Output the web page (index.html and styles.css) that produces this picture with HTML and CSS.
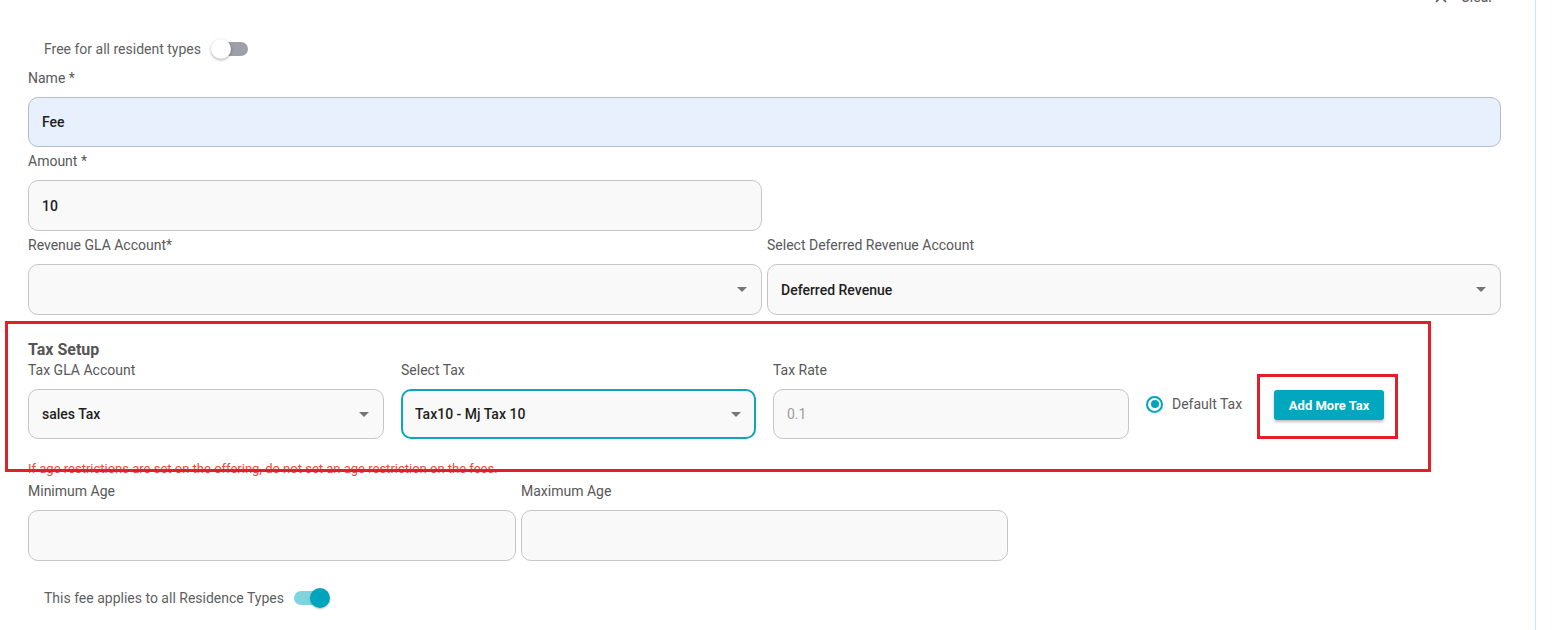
FILE: index.html
```html
<!DOCTYPE html>
<html lang="en">

<head>
  <meta charset="UTF-8">
  <meta name="viewport" content="width=device-width, initial-scale=1">
  <title>Fee Setup</title>
  <link rel="stylesheet" href="styles.css">
</head>

<body>
  <div class="fee_page">
    <div class="fee_form">
      <div class="fee_clear_row">
        <button class="fee_clear_btn">
          <svg width="12" height="12" viewBox="0 0 12 12"><path d="M1 1L11 11M11 1L1 11" stroke="#555" stroke-width="1.6" fill="none"/></svg>
          <span>Clear</span>
        </button>
      </div>

      <div class="fee_toggle_row fee_toggle_first">
        <span>Free for all resident types</span>
        <span class="fee_switch"><span class="fee_switch_track"></span><span class="fee_switch_knob"></span></span>
      </div>

      <div class="fee_group">
        <label class="fee_label">Name *</label>
        <div class="fee_input fee_input_filled">Fee</div>
      </div>

      <div class="fee_group fee_half">
        <label class="fee_label">Amount *</label>
        <div class="fee_input">10</div>
      </div>

      <div class="fee_row_two">
        <div class="fee_group">
          <label class="fee_label">Revenue GLA Account*</label>
          <div class="fee_input fee_select"><span></span><span class="fee_caret"></span></div>
        </div>
        <div class="fee_group">
          <label class="fee_label">Select Deferred Revenue Account</label>
          <div class="fee_input fee_select"><span>Deferred Revenue</span><span class="fee_caret"></span></div>
        </div>
      </div>

      <div class="fee_tax">
        <div class="fee_tax_title">Tax Setup</div>
        <div class="fee_tax_grid">
          <div class="fee_group">
            <label class="fee_label">Tax GLA Account</label>
            <div class="fee_input fee_select"><span>sales Tax</span><span class="fee_caret"></span></div>
          </div>
          <div class="fee_group">
            <label class="fee_label">Select Tax</label>
            <div class="fee_input fee_select fee_focus"><span>Tax10 - Mj Tax 10</span><span class="fee_caret"></span></div>
          </div>
          <div class="fee_group">
            <label class="fee_label">Tax Rate</label>
            <div class="fee_input fee_disabled">0.1</div>
          </div>
          <div class="fee_tax_actions">
            <span class="fee_radio"></span>
            <span class="fee_radio_label">Default Tax</span>
            <button class="fee_add_btn">Add More Tax</button>
          </div>
        </div>
        <div class="fee_warning">If age restrictions are set on the offering, do not set an age restriction on the fees.</div>
      </div>

      <div class="fee_row_age">
        <div class="fee_group">
          <label class="fee_label">Minimum Age</label>
          <div class="fee_input"></div>
        </div>
        <div class="fee_group">
          <label class="fee_label">Maximum Age</label>
          <div class="fee_input"></div>
        </div>
      </div>

      <div class="fee_toggle_row fee_toggle_last">
        <span>This fee applies to all Residence Types</span>
        <span class="fee_switch fee_switch_on"><span class="fee_switch_track"></span><span class="fee_switch_knob"></span></span>
      </div>
    </div>

    <!-- review annotations -->
    <div class="fee_mark fee_mark_section"></div>
    <div class="fee_mark fee_mark_button"></div>
  </div>
</body>

</html>
```

FILE: styles.css
```css
body {
  margin: 0;
  font-family: Roboto, "Noto Sans", sans-serif;
  background: #fff;
  color: #555;
  overflow: hidden;
}

.fee_page {
  display: flow-root;
  position: relative;
  width: 1536px;
  height: 630px;
  box-sizing: border-box;
  border-right: 1px solid #bdeef5;
  padding-left: 28px;
}

.fee_form {
  width: 1473px;
}

.fee_clear_row {
  display: flex;
  justify-content: flex-end;
  margin-top: -13px;
  padding-right: 8px;
  height: 20px;
}

.fee_clear_btn {
  display: flex;
  align-items: center;
  gap: 14px;
  background: none;
  border: none;
  padding: 0;
  font-family: inherit;
  font-size: 14px;
  color: #555;
}

.fee_toggle_row {
  display: flex;
  align-items: center;
  gap: 10px;
  padding-left: 16px;
  height: 24px;
  font-size: 14px;
  color: #5f5f5f;
}

.fee_toggle_first {
  margin-top: 30px;
}

.fee_toggle_last {
  margin-top: 25px;
}

.fee_switch {
  position: relative;
  width: 37px;
  height: 22px;
}

.fee_switch_track {
  position: absolute;
  left: 12px;
  right: 0;
  top: 4px;
  height: 14px;
  border-radius: 7px;
  background: #9e9fa8;
}

.fee_switch_knob {
  position: absolute;
  left: 0;
  top: 1px;
  width: 20px;
  height: 20px;
  border-radius: 50%;
  background: #fff;
  box-shadow: 0 1px 3px rgba(0, 0, 0, 0.35);
}

.fee_switch_on .fee_switch_track {
  left: 0;
  right: 3px;
  background: #80d4df;
}

.fee_switch_on .fee_switch_knob {
  left: 16px;
  background: #00a5bd;
  box-shadow: 0 1px 2px rgba(0, 0, 0, 0.25);
}

.fee_group {
  margin-top: 7px;
}

.fee_label {
  display: block;
  font-size: 14px;
  line-height: 20px;
  color: #585858;
  margin-bottom: 9px;
}

.fee_input {
  display: flex;
  align-items: center;
  justify-content: space-between;
  box-sizing: border-box;
  height: 51px;
  padding: 0 13px;
  border: 1px solid #c6c6c6;
  border-radius: 10px;
  background: #f9f9f9;
  font-size: 14px;
  font-weight: 500;
  color: #1e1e1e;
}

.fee_input_filled {
  height: 50px;
  background: #e7f0fc;
  border-color: #b4bcc6;
}

.fee_focus {
  border: 2px solid #0aa6bc;
  padding: 0 12px;
}

.fee_disabled {
  color: #9e9e9e;
  font-weight: 400;
}

.fee_caret {
  width: 0;
  height: 0;
  border-left: 5px solid transparent;
  border-right: 5px solid transparent;
  border-top: 5px solid #757575;
  margin-right: 1px;
}

.fee_half {
  width: 734px;
  margin-top: 4px;
}

.fee_row_two {
  display: grid;
  grid-template-columns: 1fr 1fr;
  gap: 5px;
  margin-top: 4px;
}

.fee_row_two .fee_group {
  margin-top: 0;
}

.fee_tax {
  padding-top: 25px;
}

.fee_tax_title {
  font-size: 16px;
  font-weight: 700;
  line-height: 20px;
  color: #555;
}

.fee_tax_grid {
  display: grid;
  grid-template-columns: 356px 355px 356px 1fr;
  gap: 17px;
}

.fee_tax_grid .fee_group {
  margin-top: 0;
}

.fee_tax_grid .fee_input {
  height: 50px;
}

.fee_tax_actions {
  display: flex;
  align-items: center;
  padding-top: 29px;
  height: 50px;
}

.fee_radio {
  box-sizing: border-box;
  width: 17px;
  height: 17px;
  border: 2px solid #00a5bd;
  border-radius: 50%;
  position: relative;
  margin-top: -20px;
}

.fee_radio::after {
  content: "";
  position: absolute;
  left: 2.5px;
  top: 2.5px;
  width: 8px;
  height: 8px;
  border-radius: 50%;
  background: #00a5bd;
}

.fee_radio_label {
  margin-left: 9px;
  margin-top: -20px;
  font-size: 14px;
  color: #5a5a5a;
}

.fee_add_btn {
  margin-left: 32px;
  margin-top: -18px;
  width: 110px;
  height: 30px;
  border: none;
  border-radius: 3px;
  background: #00a7bf;
  color: #fff;
  font-family: inherit;
  font-size: 13px;
  font-weight: 700;
  box-shadow: 0 2px 3px rgba(0, 0, 0, 0.25);
}

.fee_warning {
  margin-top: 20px;
  font-size: 13px;
  line-height: 20px;
  color: #f2453d;
}

.fee_row_age {
  display: grid;
  grid-template-columns: 488px 487px;
  gap: 5px;
}

.fee_row_age .fee_group {
  margin-top: 2px;
}

.fee_mark {
  position: absolute;
  box-sizing: border-box;
  border: 3px solid #e21f26;
}

.fee_mark_section {
  left: 5px;
  top: 321px;
  width: 1426px;
  height: 151px;
}

.fee_mark_button {
  left: 1257px;
  top: 374px;
  width: 141px;
  height: 65px;
}
```
